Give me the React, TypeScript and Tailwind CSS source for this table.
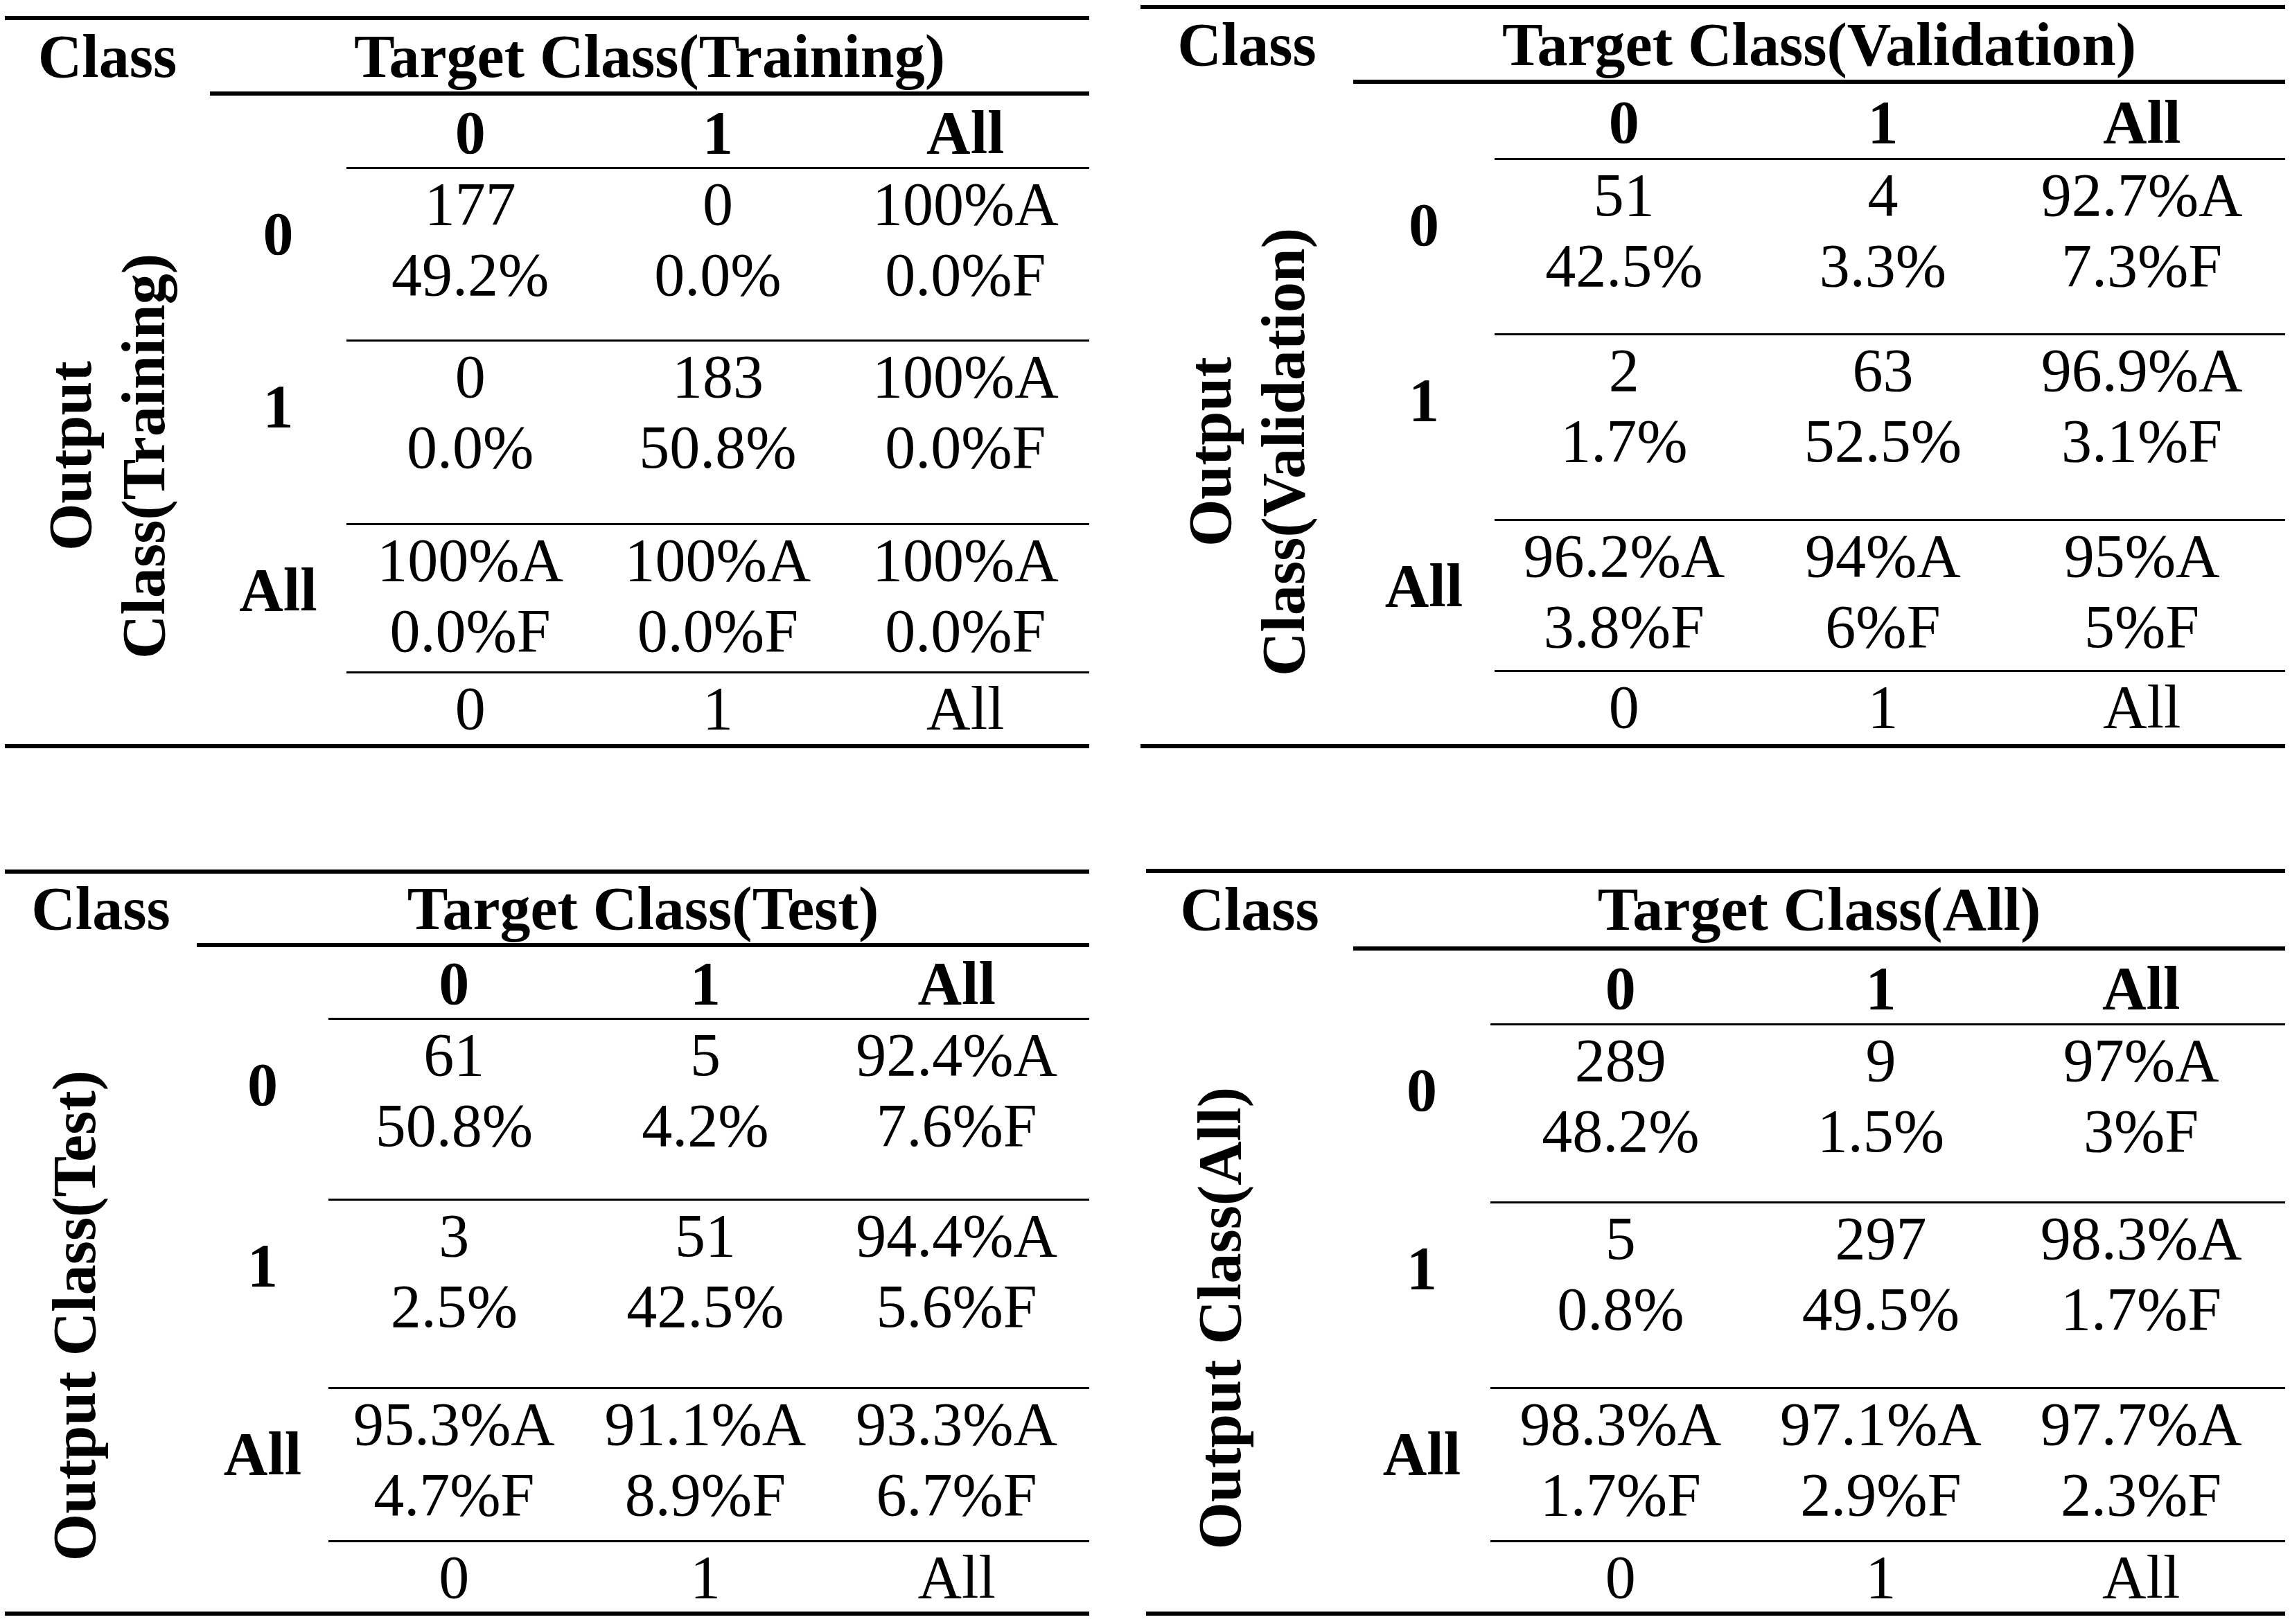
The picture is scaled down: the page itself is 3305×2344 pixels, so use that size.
import React from 'react';

// ─────────────────────────────────────────────────────────────
// Data
// ─────────────────────────────────────────────────────────────

type Cell = [string, string];

interface TableConfig {
  title: string;
  outputLabel: string[];
  wrap: string;
  labelW: string;
  rowLabelW: string;
  headPad: string;
  headRight: string;
  colHead: string;
  spacer: string;
  labelBox: string;
  dataPad: string;
  rowH: [string, string, string];
  foot: string;
  rows: [Cell[], Cell[], Cell[]];
}

const TOP_TABLES: TableConfig[] = [
  {
    title: 'Target Class(Training)',
    outputLabel: ['Output', 'Class(Training)'],
    wrap: 'ml-[7px] mt-[23px] w-[1565px]',
    labelW: 'w-[296px]',
    rowLabelW: 'w-[197px]',
    headPad: 'pt-[2px]',
    headRight: 'h-[109px] pt-[2px]',
    colHead: 'h-[106px] pt-[3px]',
    spacer: 'h-[106px]',
    labelBox: 'justify-center',
    dataPad: 'pr-0',
    rowH: ['h-[249px]', 'h-[265px]', 'h-[214px]'],
    foot: 'h-[102px]',
    rows: [
      [['177', '49.2%'], ['0', '0.0%'], ['100%A', '0.0%F']],
      [['0', '0.0%'], ['183', '50.8%'], ['100%A', '0.0%F']],
      [['100%A', '0.0%F'], ['100%A', '0.0%F'], ['100%A', '0.0%F']],
    ],
  },
  {
    title: 'Target Class(Validation)',
    outputLabel: ['Output', 'Class(Validation)'],
    wrap: 'ml-[74px] mt-[7px] w-[1652px]',
    labelW: 'w-[307px]',
    rowLabelW: 'w-[204px]',
    headPad: 'pt-[1px]',
    headRight: 'h-[108px] pt-[1px]',
    colHead: 'h-[110px] pt-[5px]',
    spacer: 'h-[110px]',
    labelBox: 'justify-center',
    dataPad: 'pr-[20px]',
    rowH: ['h-[253px]', 'h-[268px]', 'h-[218px]'],
    foot: 'h-[104px]',
    rows: [
      [['51', '42.5%'], ['4', '3.3%'], ['92.7%A', '7.3%F']],
      [['2', '1.7%'], ['63', '52.5%'], ['96.9%A', '3.1%F']],
      [['96.2%A', '3.8%F'], ['94%A', '6%F'], ['95%A', '5%F']],
    ],
  },
];

const BOTTOM_TABLES: TableConfig[] = [
  {
    title: 'Target Class(Test)',
    outputLabel: ['Output Class(Test)'],
    wrap: 'ml-[7px] mt-[15px] w-[1565px]',
    labelW: 'w-[277px]',
    rowLabelW: 'w-[190px]',
    headPad: 'pt-0',
    headRight: 'h-[106px] pt-0',
    colHead: 'h-[105px] pt-[2px]',
    spacer: 'h-[105px]',
    labelBox: 'justify-start pl-[48px]',
    dataPad: 'pr-[10px]',
    rowH: ['h-[261px]', 'h-[272px]', 'h-[221px]'],
    foot: 'h-[100px]',
    rows: [
      [['61', '50.8%'], ['5', '4.2%'], ['92.4%A', '7.6%F']],
      [['3', '2.5%'], ['51', '42.5%'], ['94.4%A', '5.6%F']],
      [['95.3%A', '4.7%F'], ['91.1%A', '8.9%F'], ['93.3%A', '6.7%F']],
    ],
  },
  {
    title: 'Target Class(All)',
    outputLabel: ['Output Class(All)'],
    wrap: 'ml-[82px] mt-[14px] w-[1644px]',
    labelW: 'w-[299px]',
    rowLabelW: 'w-[198px]',
    headPad: 'pt-[2px]',
    headRight: 'h-[112px] pt-[2px]',
    colHead: 'h-[108px] pt-[4px]',
    spacer: 'h-[108px]',
    labelBox: 'justify-start pl-[54px]',
    dataPad: 'pr-[20px]',
    rowH: ['h-[257px]', 'h-[268px]', 'h-[221px]'],
    foot: 'h-[100px]',
    rows: [
      [['289', '48.2%'], ['9', '1.5%'], ['97%A', '3%F']],
      [['5', '0.8%'], ['297', '49.5%'], ['98.3%A', '1.7%F']],
      [['98.3%A', '1.7%F'], ['97.1%A', '2.9%F'], ['97.7%A', '2.3%F']],
    ],
  },
];

const ROW_LABELS = ['0', '1', 'All'];
const COLS = ['0', '1', 'All'];

// ─────────────────────────────────────────────────────────────
// Confusion table
// ─────────────────────────────────────────────────────────────

const ConfusionTable: React.FC<{ cfg: TableConfig }> = ({ cfg }) => (
  <div className={`${cfg.wrap} shrink-0 border-y-[6px] border-black`}>
    {/* Title row */}
    <div className="flex">
      <div className={`${cfg.labelW} ${cfg.headPad} shrink-0 text-center font-bold`}>Class</div>
      <div className={`${cfg.headRight} flex-1 border-b-[6px] border-black text-center font-bold`}>
        {cfg.title}
      </div>
    </div>

    <div className="flex">
      {/* Rotated output label */}
      <div className={`${cfg.labelW} flex shrink-0 flex-col`}>
        <div className={cfg.spacer} />
        <div className={`flex flex-1 items-center ${cfg.labelBox}`}>
          <div className="rotate-180 whitespace-nowrap text-center font-bold leading-[106px] [writing-mode:vertical-rl]">
            {cfg.outputLabel.map((l) => (
              <div key={l}>{l}</div>
            ))}
          </div>
        </div>
      </div>

      <div className="flex flex-1 flex-col">
        {/* Column headers */}
        <div className="flex">
          <div className={`${cfg.rowLabelW} shrink-0`} />
          <div className={`${cfg.colHead} ${cfg.dataPad} grid flex-1 grid-cols-3 border-b-[3px] border-black text-center font-bold`}>
            {COLS.map((c) => (
              <div key={c}>{c}</div>
            ))}
          </div>
        </div>

        {/* Rows */}
        {cfg.rows.map((row, ri) => (
          <div key={ri} className="flex">
            <div className={`${cfg.rowLabelW} shrink-0 pt-[43px] text-center font-bold`}>{ROW_LABELS[ri]}</div>
            <div className={`${cfg.rowH[ri]} ${cfg.dataPad} grid flex-1 grid-cols-3 border-b-[3px] border-black text-center`}>
              {row.map((cell, ci) => (
                <div key={ci}>
                  <div>{cell[0]}</div>
                  <div>{cell[1]}</div>
                </div>
              ))}
            </div>
          </div>
        ))}

        {/* Footer */}
        <div className="flex">
          <div className={`${cfg.rowLabelW} shrink-0`} />
          <div className={`${cfg.foot} ${cfg.dataPad} grid flex-1 grid-cols-3 text-center`}>
            {COLS.map((c) => (
              <div key={c}>{c}</div>
            ))}
          </div>
        </div>
      </div>
    </div>
  </div>
);

// ─────────────────────────────────────────────────────────────
// Page
// ─────────────────────────────────────────────────────────────

export default function App() {
  return (
    <div className="flex h-[2344px] w-[3305px] flex-col bg-white font-['Liberation_Serif','Times_New_Roman',serif] text-[88px] leading-[102px] text-black">
      <div className="flex h-[1240px] items-start">
        {TOP_TABLES.map((t) => (
          <ConfusionTable key={t.title} cfg={t} />
        ))}
      </div>
      <div className="flex items-start">
        {BOTTOM_TABLES.map((t) => (
          <ConfusionTable key={t.title} cfg={t} />
        ))}
      </div>
    </div>
  );
}
